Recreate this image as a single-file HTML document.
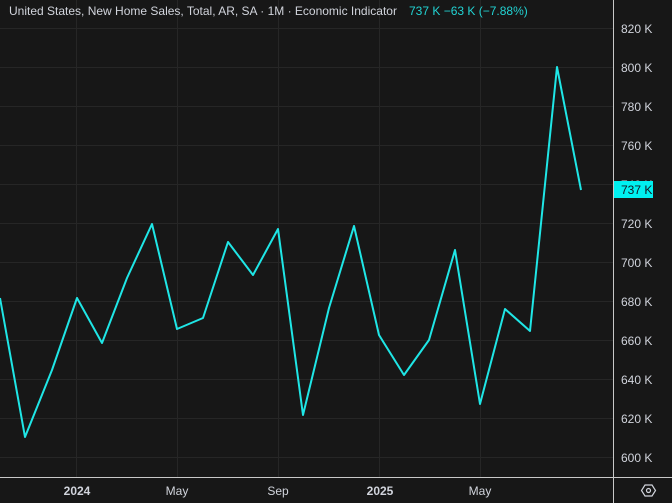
<!DOCTYPE html>
<html><head><meta charset="utf-8"><style>
html,body{margin:0;padding:0;background:#171717;width:672px;height:503px;overflow:hidden}
svg{display:block}
text{font-family:"Liberation Sans",sans-serif}
</style></head><body>
<svg width="672" height="503" viewBox="0 0 672 503" xmlns="http://www.w3.org/2000/svg">
<rect width="672" height="503" fill="#171717"/>
<g stroke="#262626" stroke-width="1">
<line x1="0" y1="28.5" x2="613" y2="28.5"/>
<line x1="0" y1="67.5" x2="613" y2="67.5"/>
<line x1="0" y1="106.5" x2="613" y2="106.5"/>
<line x1="0" y1="145.5" x2="613" y2="145.5"/>
<line x1="0" y1="184.5" x2="613" y2="184.5"/>
<line x1="0" y1="223.5" x2="613" y2="223.5"/>
<line x1="0" y1="262.5" x2="613" y2="262.5"/>
<line x1="0" y1="301.5" x2="613" y2="301.5"/>
<line x1="0" y1="340.5" x2="613" y2="340.5"/>
<line x1="0" y1="379.5" x2="613" y2="379.5"/>
<line x1="0" y1="418.5" x2="613" y2="418.5"/>
<line x1="0" y1="457.5" x2="613" y2="457.5"/>
<line x1="76.5" y1="0" x2="76.5" y2="477"/>
<line x1="177.5" y1="0" x2="177.5" y2="477"/>
<line x1="278.5" y1="0" x2="278.5" y2="477"/>
<line x1="379.5" y1="0" x2="379.5" y2="477"/>
<line x1="480.5" y1="0" x2="480.5" y2="477"/>
</g>
<polyline fill="none" stroke="#1fe6e6" stroke-width="2" stroke-linejoin="round" points="0,298 25,437 52,370 77,298 102,343 127,278 152,224 177,329 203,318 228,242 253,275 278,229 303,415 329,308 354,226 379,335 404,375 429,340 455,250 480,404 505,309 530,331 557,67 581,190"/>
<line x1="613.5" y1="0" x2="613.5" y2="503" stroke="#c8c8c8" stroke-width="1"/>
<line x1="0" y1="477.5" x2="672" y2="477.5" stroke="#c8c8c8" stroke-width="1"/>
<g fill="#d1d4dc" font-size="12">
<text x="621" y="33">820 K</text>
<text x="621" y="72">800 K</text>
<text x="621" y="111">780 K</text>
<text x="621" y="150">760 K</text>
<text x="621" y="189">740 K</text>
<text x="621" y="228">720 K</text>
<text x="621" y="267">700 K</text>
<text x="621" y="306">680 K</text>
<text x="621" y="345">660 K</text>
<text x="621" y="384">640 K</text>
<text x="621" y="423">620 K</text>
<text x="621" y="462">600 K</text>
</g>
<rect x="614" y="181" width="39" height="17" fill="#00f0f0"/>
<text x="621" y="194" font-size="12" fill="#131722">737 K</text>
<g fill="#d1d4dc" font-size="12" text-anchor="middle">
<text x="77" y="495" font-weight="bold">2024</text>
<text x="177" y="495">May</text>
<text x="278" y="495">Sep</text>
<text x="380" y="495" font-weight="bold">2025</text>
<text x="480" y="495">May</text>
</g>
<polygon points="645,485 652,485 655.5,490.5 652,496 645,496 641.5,490.5" fill="none" stroke="#d1d4dc" stroke-width="1.2"/>
<circle cx="648.5" cy="490.5" r="2" fill="none" stroke="#d1d4dc" stroke-width="1.2"/>
<text x="9" y="15" font-size="12" fill="#d1d4dc">United States, New Home Sales, Total, AR, SA · 1M · Economic Indicator</text>
<text x="409" y="15" font-size="12" fill="#22d3d3">737 K  −63 K (−7.88%)</text>
</svg>
</body></html>
